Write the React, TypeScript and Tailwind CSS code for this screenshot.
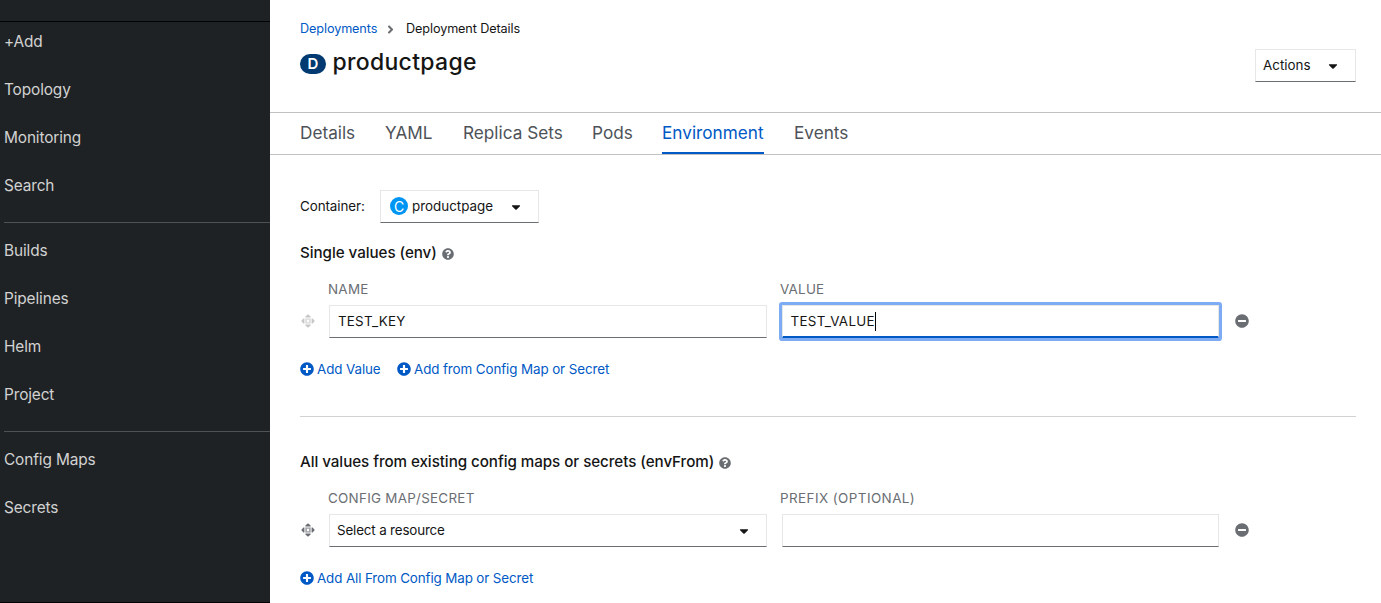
import { FaCaretDown, FaPlusCircle, FaMinusCircle, FaQuestionCircle, FaAngleRight } from "react-icons/fa";

const navGroups: string[][] = [
  ["+Add", "Topology", "Monitoring", "Search"],
  ["Builds", "Pipelines", "Helm", "Project"],
  ["Config Maps", "Secrets"],
];

const tabs = [
  { label: "Details", width: "w-[55px]" },
  { label: "YAML", width: "w-[48px]" },
  { label: "Replica Sets", width: "w-[99px]" },
  { label: "Pods", width: "w-[40px]" },
  { label: "Environment", width: "w-[102px]", active: true },
  { label: "Events", width: "w-[55px]" },
];

const box = "flex h-[33px] items-center border border-[#e7e7e7] border-b-[#6a6e73] bg-white";

function DragHandle({ className }: { className: string }) {
  return (
    <svg viewBox="0 0 14 14" className={`size-[14px] ${className}`} fill="currentColor">
      <path d="M7 .2 9.6 2.4V3.4H4.4V2.4zM7 13.8 4.4 11.6V10.6H9.6V11.6zM.2 7 2.4 4.4H3.4V9.6H2.4zM13.8 7 11.6 9.6H10.6V4.4H11.6z" />
      <path d="M4.4 4.4h1.4v1.4H4.4zM6.3 4.4h1.4v1.4H6.3zM8.2 4.4h1.4v1.4H8.2zM4.4 6.3h1.4v1.4H4.4zM8.2 6.3h1.4v1.4H8.2zM4.4 8.2h1.4v1.4H4.4zM6.3 8.2h1.4v1.4H6.3zM8.2 8.2h1.4v1.4H8.2z" />
    </svg>
  );
}

function AddLink({ label, tracking }: { label: string; tracking: string }) {
  return (
    <a className="flex items-center gap-[3px] text-[#0059c5]">
      <FaPlusCircle className="size-[14px]" />
      <span className={tracking}>{label}</span>
    </a>
  );
}

function SectionTitle({ children }: { children: string }) {
  return (
    <h2 className="flex h-6 items-center gap-[5px] text-[15.2px] font-medium tracking-[-0.06px] text-[#151515]">
      {children}
      <FaQuestionCircle className="mt-px size-3 text-[#6a6e73]" />
    </h2>
  );
}

function ColumnLabels({ left, right, rightTracking }: { left: string; right: string; rightTracking: string }) {
  return (
    <div className="flex h-5 items-center text-[#6a6e73]">
      <span className="ml-[28px] w-[452px] tracking-[0.28px]">{left}</span>
      <span className={rightTracking}>{right}</span>
    </div>
  );
}

export default function App() {
  return (
    <div className="flex h-[603px] w-[1381px] overflow-hidden bg-white font-['Inter',sans-serif] text-[13.4px] whitespace-nowrap text-[#151515]">
      <nav className="flex w-[270px] shrink-0 flex-col border-b border-[#030303] bg-[#1f2225] text-[15.4px] tracking-[-0.12px] text-[#d2d2d2]">
        <div className="h-[22px] shrink-0 border-b border-[#030303]" />
        {navGroups.map((group, i) => (
          <ul key={i} className={i === 0 ? "-mt-[4px]" : "ml-1 mt-[12px] border-t border-[#4f5255] pt-[4px]"}>
            {group.map((item) => (
              <li key={item} className={`flex h-12 items-center ${i === 0 ? "pl-1" : ""}`}>{item}</li>
            ))}
          </ul>
        ))}
      </nav>

      <main className="flex min-w-0 flex-1 flex-col">
        <header className="flex h-[112px] shrink-0 justify-between pl-[30px] pr-[25px]">
          <div className="flex flex-col pt-[19px]">
            <div className="flex h-5 items-center text-[12.65px] tracking-[-0.1px]">
              <a className="w-[78px] text-[#0059c5]">Deployments</a>
              <FaAngleRight className="ml-[6px] mr-[9px] size-[13px] text-[#6a6e73]" />
              <span>Deployment Details</span>
            </div>
            <h1 className="mt-[7px] flex h-8 items-center gap-[6.5px] text-[23px] font-medium tracking-[0.3px]">
              <span className="mt-[4px] flex h-5 w-[26px] items-center justify-center rounded-full bg-[#003a70] text-[15px] font-semibold tracking-normal text-white">D</span>
              <span>productpage</span>
            </h1>
          </div>
          <button className={`${box} mt-[49px] w-[101px] pl-[7px]`}>
            <span className="w-[47px]">Actions</span>
            <FaCaretDown className="ml-[16px] size-[14px]" />
          </button>
        </header>

        <div className="flex h-[43px] shrink-0 gap-[30px] border-y border-[#c1c1c1] pl-[30px] text-[17.2px] text-[#4d5258]">
          {tabs.map((tab) => (
            <a
              key={tab.label}
              className={`${tab.width} flex h-[41px] items-center border-b-2 ${tab.active ? "border-[#0059c5] text-[#0059c5]" : "border-transparent"}`}
            >
              {tab.label}
            </a>
          ))}
        </div>

        <div className="flex flex-col pl-[30px] pr-[25px] pt-[35px]">
          <div className="flex h-[33px] items-center">
            <span className="w-[80px] tracking-[-0.08px]">Container:</span>
            <button className={`${box} w-[159px] pl-[9px]`}>
              <span className="mb-px mr-[4px] flex size-[18px] items-center justify-center rounded-full bg-[#0095f2] text-[14px] text-white">C</span>
              <span className="w-[81px]">productpage</span>
              <FaCaretDown className="ml-[16px] size-[14px]" />
            </button>
          </div>

          <section className="mt-[18px] flex flex-col">
            <SectionTitle>Single values (env)</SectionTitle>
            <div className="mt-[14px]">
              <ColumnLabels left="NAME" right="VALUE" rightTracking="tracking-[0.25px]" />
            </div>
            <div className="mt-[6px] flex h-[33px] items-center">
              <DragHandle className="mb-px ml-[1px] mr-[14px] text-[#c6c7c8]" />
              <div className={`${box} mr-[15px] w-[438px] pl-[8px] tracking-[0.2px]`}>TEST_KEY</div>
              <div className="flex h-[33px] w-[437px] items-center rounded-[1px] border border-b-2 border-[#e7e7e7] border-b-[#0059c5] pl-[7.5px] tracking-[0.3px] ring-3 ring-[#7eacf4]">
                TEST_VALUE
                <span className="h-[19px] w-px bg-black" />
              </div>
              <FaMinusCircle className="mb-[2px] ml-[16px] size-[14px] text-[#6a6e73]" />
            </div>
            <div className="mt-[21px] flex h-5 items-center">
              <div className="w-[97px]">
                <AddLink label="Add Value" tracking="tracking-[-0.1px]" />
              </div>
              <AddLink label="Add from Config Map or Secret" tracking="tracking-[-0.1px]" />
            </div>
          </section>

          <hr className="mt-[37px] border-t border-[#d2d2d2]" />

          <section className="mt-[33px] flex flex-col">
            <SectionTitle>All values from existing config maps or secrets (envFrom)</SectionTitle>
            <div className="mt-[14px]">
              <ColumnLabels left="CONFIG MAP/SECRET" right="PREFIX (OPTIONAL)" rightTracking="tracking-[0.45px]" />
            </div>
            <div className="mt-[6px] flex h-[33px] items-center">
              <DragHandle className="mb-px ml-[1px] mr-[14px] text-[#6a6e73]" />
              <button className={`${box} mr-[15px] w-[438px] justify-between pl-[7px] pr-[15px] tracking-[-0.16px]`}>
                Select a resource
                <FaCaretDown className="size-[14px]" />
              </button>
              <div className={`${box} w-[437px]`} />
              <FaMinusCircle className="mb-[2px] ml-[16px] size-[14px] text-[#6a6e73]" />
            </div>
            <div className="mt-[21px] flex h-5 items-center">
              <AddLink label="Add All From Config Map or Secret" tracking="tracking-[-0.12px]" />
            </div>
          </section>
        </div>
      </main>
    </div>
  );
}
